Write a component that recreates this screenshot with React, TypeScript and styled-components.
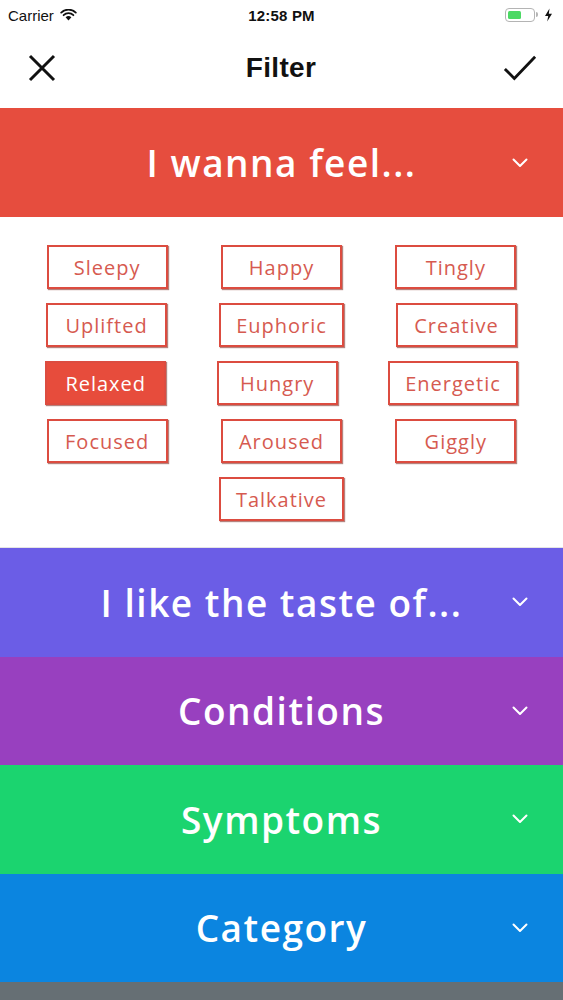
import React from "react";
import styled, { createGlobalStyle } from "styled-components";

const Global = createGlobalStyle`
  html, body { margin: 0; padding: 0; background: #ffffff; }
  body { font-family: "Open Sans", "Noto Sans", sans-serif; }
  * { box-sizing: border-box; }
`;

const Screen = styled.div`
  width: 563px;
  height: 1000px;
  display: flex;
  flex-direction: column;
  background: #666f74;
  overflow: hidden;
`;

const StatusBar = styled.div`
  height: 30px;
  background: #fff;
  display: grid;
  grid-template-columns: 1fr auto 1fr;
  align-items: center;
  padding: 0 8px 0 8px;
  font-family: "Liberation Sans", Arial, sans-serif;
  font-size: 15px;
  color: #111;
`;

const StatusLeft = styled.div`
  display: flex;
  align-items: center;
  gap: 6px;
`;

const StatusTime = styled.div`
  font-weight: 700;
  letter-spacing: 0.2px;
`;

const StatusRight = styled.div`
  display: flex;
  justify-content: flex-end;
  align-items: center;
  gap: 4px;
  padding-right: 2px;
`;

const Battery = styled.div`
  position: relative;
  width: 30px;
  height: 14px;
  border: 1.5px solid #b4b4b4;
  border-radius: 4px;
  padding: 2px;
  &::after {
    content: "";
    position: absolute;
    right: -4px;
    top: 3px;
    width: 2px;
    height: 5px;
    border-radius: 0 2px 2px 0;
    background: #b4b4b4;
  }
`;

const BatteryFill = styled.div`
  width: 55%;
  height: 100%;
  background: #4cd964;
  border-radius: 1.5px;
`;

const NavBar = styled.div`
  height: 78px;
  background: #fff;
  display: flex;
  align-items: center;
  justify-content: space-between;
  padding: 0 26px 2px 25px;
`;

const NavTitle = styled.div`
  font-family: "Liberation Sans", Arial, sans-serif;
  font-weight: 700;
  font-size: 28px;
  color: #111;
  letter-spacing: 0.3px;
`;

const IconButton = styled.div`
  width: 34px;
  height: 34px;
  display: flex;
  align-items: center;
  justify-content: center;
`;

const SectionHeader = styled.div<{ $bg: string; $h: number }>`
  height: ${(p) => p.$h}px;
  flex: none;
  background: ${(p) => p.$bg};
  position: relative;
  display: flex;
  align-items: center;
  justify-content: center;
`;

const SectionTitle = styled.div`
  font-family: "Open Sans", "Noto Sans", sans-serif;
  font-weight: 600;
  font-size: 37px;
  color: #fff;
  letter-spacing: 1.5px;
`;

const Chevron = styled.div`
  position: absolute;
  right: 35px;
  top: 50%;
  transform: translateY(-50%);
  display: flex;
`;

const ChipArea = styled.div`
  height: 331px;
  flex: none;
  background: #fff;
  padding: 21px 20px;
  display: flex;
  flex-wrap: wrap;
  justify-content: space-around;
  align-content: flex-start;
  border-bottom: 1px solid #e4e4e4;
`;

const Chip = styled.div<{ $active?: boolean }>`
  margin: 7px 10px;
  min-width: 121px;
  height: 44px;
  padding: 0 15px;
  display: flex;
  align-items: center;
  justify-content: center;
  border: 2px solid #dc4c40;
  box-shadow: 1px 1px 1px rgba(120, 30, 20, 0.55);
  background: ${(p) => (p.$active ? "#e74c3c" : "#fff")};
  color: ${(p) => (p.$active ? "#fff" : "#d65a50")};
  font-family: "Open Sans", "Noto Sans", sans-serif;
  font-size: 20px;
  letter-spacing: 1px;
`;

const feelings = [
  "Sleepy", "Happy", "Tingly",
  "Uplifted", "Euphoric", "Creative",
  "Relaxed", "Hungry", "Energetic",
  "Focused", "Aroused", "Giggly",
  "Talkative",
];

const sections = [
  { title: "I like the taste of...", bg: "#6b5de6" },
  { title: "Conditions", bg: "#9840bf" },
  { title: "Symptoms", bg: "#1bd46f" },
  { title: "Category", bg: "#0b85e0" },
];

const ChevronIcon = () => (
  <svg width="16" height="10" viewBox="0 0 16 10">
    <path d="M1.5 1.5 L8 8 L14.5 1.5" fill="none" stroke="#fff" strokeWidth="2" strokeLinecap="round" strokeLinejoin="round" />
  </svg>
);

const Header = ({ title, bg, h }: { title: string; bg: string; h: number }) => (
  <SectionHeader $bg={bg} $h={h}>
    <SectionTitle>{title}</SectionTitle>
    <Chevron>
      <ChevronIcon />
    </Chevron>
  </SectionHeader>
);

export default function App() {
  return (
    <>
      <Global />
      <Screen>
        <StatusBar>
          <StatusLeft>
            <span>Carrier</span>
            <svg width="17" height="12" viewBox="0 0 17 12">
              <path d="M8.5 11.5 L5.6 8.3 A4.2 4.2 0 0 1 11.4 8.3 Z" fill="#111" />
              <path d="M3.6 6.2 A7 7 0 0 1 13.4 6.2" fill="none" stroke="#111" strokeWidth="1.8" strokeLinecap="round" />
              <path d="M1.2 3.6 A10.5 10.5 0 0 1 15.8 3.6" fill="none" stroke="#111" strokeWidth="1.8" strokeLinecap="round" />
            </svg>
          </StatusLeft>
          <StatusTime>12:58 PM</StatusTime>
          <StatusRight>
            <Battery>
              <BatteryFill />
            </Battery>
            <svg width="9" height="14" viewBox="0 0 9 14" style={{ marginLeft: 5 }}>
              <path d="M5.5 0.5 L1 8 H4.2 L3.2 13.5 L8 5.8 H4.8 Z" fill="#111" />
            </svg>
          </StatusRight>
        </StatusBar>
        <NavBar>
          <IconButton>
            <svg width="30" height="30" viewBox="0 0 30 30">
              <path d="M3 3 L27 27 M27 3 L3 27" stroke="#111" strokeWidth="3" strokeLinecap="butt" />
            </svg>
          </IconButton>
          <NavTitle>Filter</NavTitle>
          <IconButton>
            <svg width="36" height="30" viewBox="0 0 36 30">
              <path d="M2 16 L12 26 L34 3" fill="none" stroke="#111" strokeWidth="3" />
            </svg>
          </IconButton>
        </NavBar>
        <Header title="I wanna feel..." bg="#e64d3e" h={109} />
        <ChipArea>
          {feelings.map((f) => (
            <Chip key={f} $active={f === "Relaxed"}>
              {f}
            </Chip>
          ))}
        </ChipArea>
        {sections.map((s) => (
          <Header key={s.title} title={s.title} bg={s.bg} h={108.5} />
        ))}
      </Screen>
    </>
  );
}
